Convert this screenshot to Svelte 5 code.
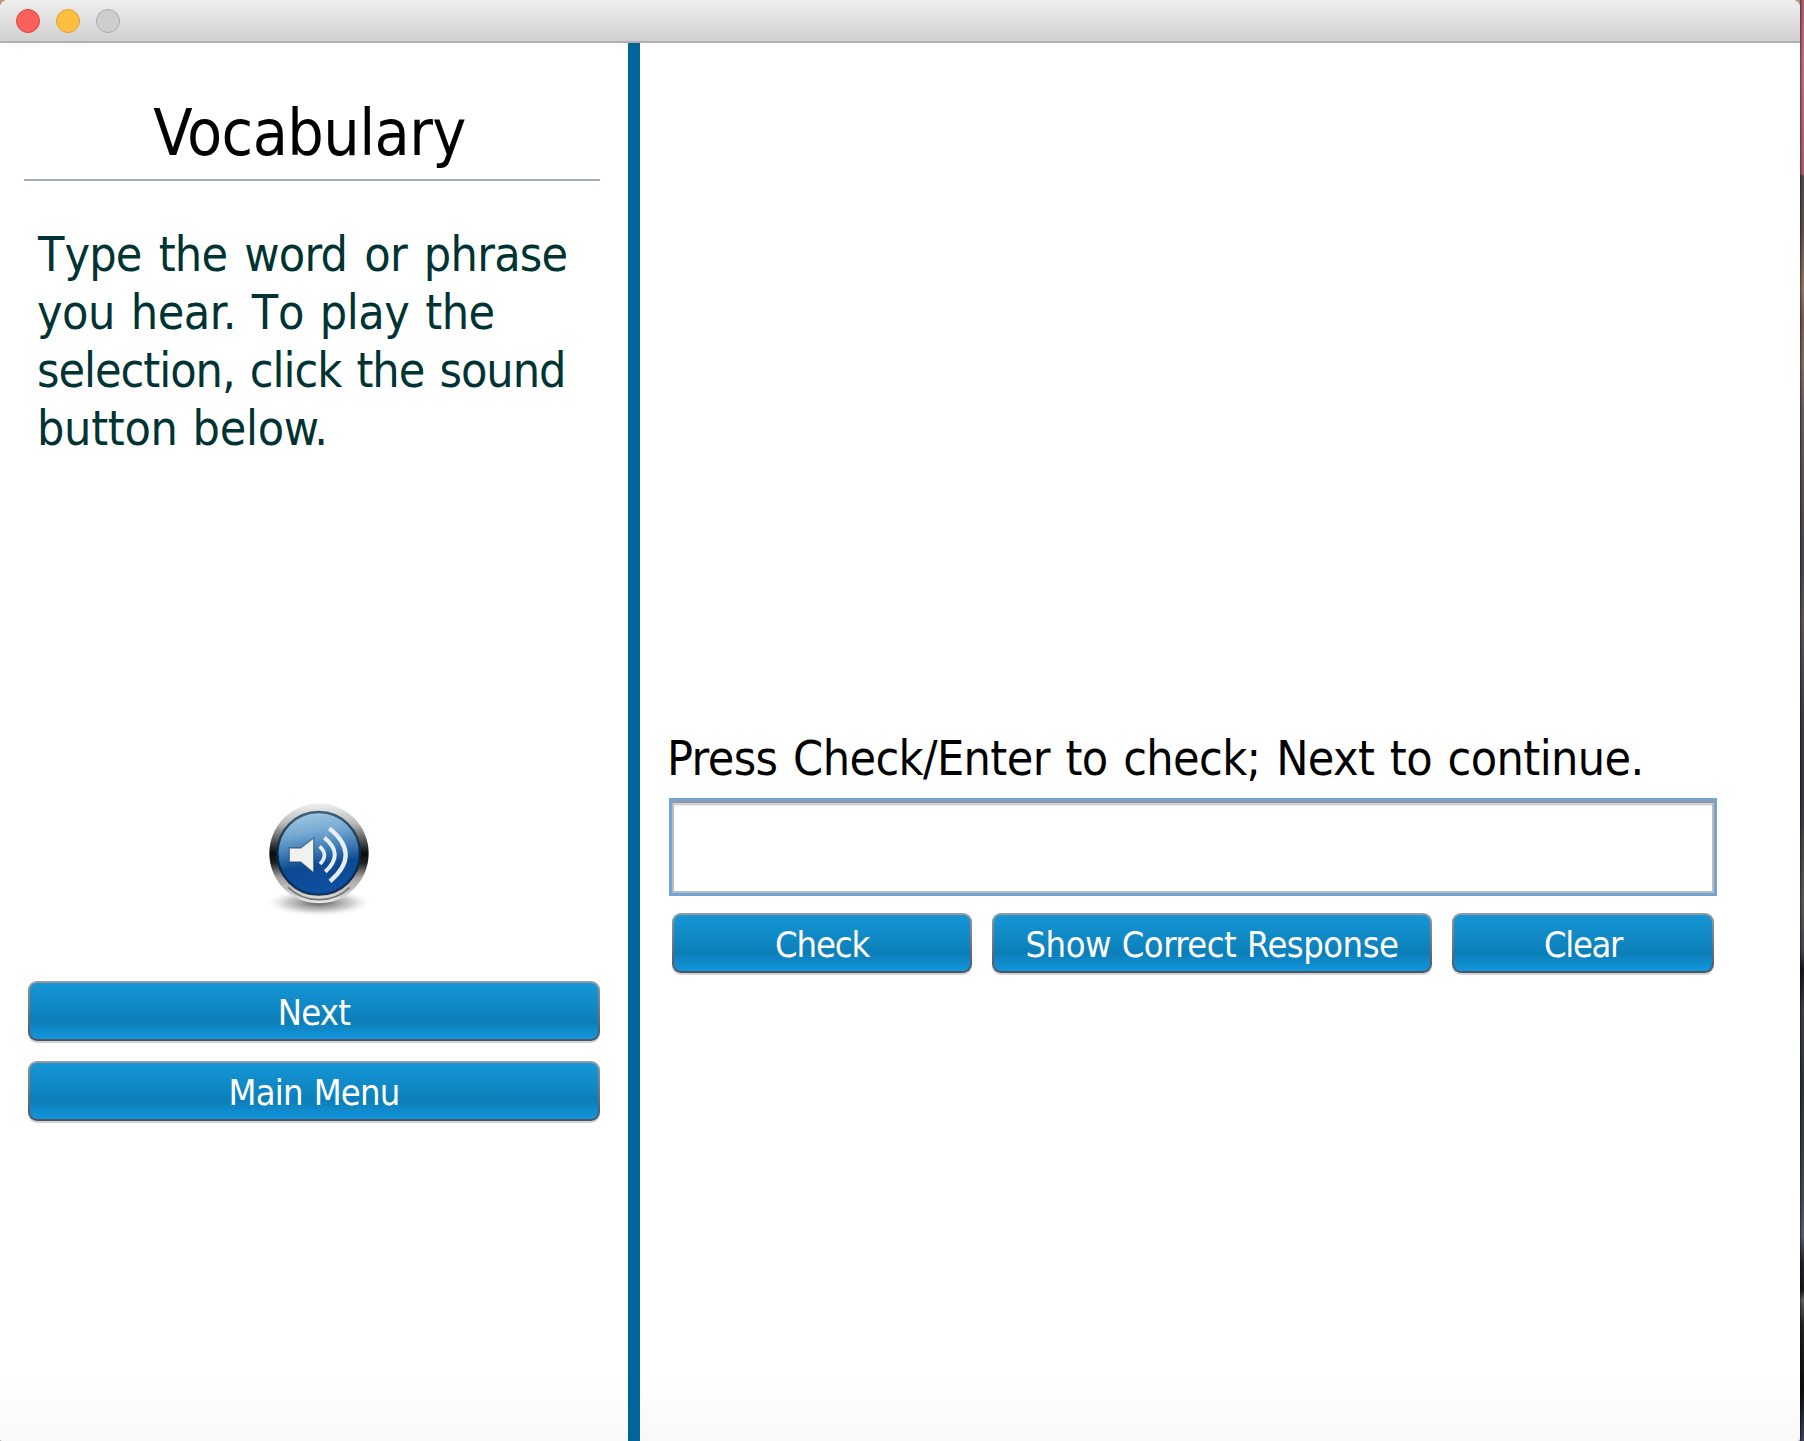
<script>
  let answer = $state('');
</script>

<div class="desktop">
  <div class="window">
    <header class="titlebar">
      <span class="light close"></span>
      <span class="light minimize"></span>
      <span class="light zoom"></span>
    </header>

    <main>
      <aside>
        <h1>Vocabulary</h1>
        <p class="instructions">
          <span class="l1"><span class="cap">T</span>ype the word or phrase</span>
          <span class="l2">you hear. <span class="cap">T</span>o play the</span>
          <span class="l3">selection, click the sound</span>
          <span class="l4">button below.</span>
        </p>

        <div class="sound">
          <svg width="150" height="140" viewBox="0 0 450 420" role="img" aria-label="Play sound">
            <defs>
              <linearGradient id="rim" x1="0" y1="0" x2="0" y2="1">
                <stop offset="0" stop-color="#f1f1f1" />
                <stop offset="0.2" stop-color="#b9bbba" />
                <stop offset="0.37" stop-color="#555" />
                <stop offset="0.5" stop-color="#080a0c" />
                <stop offset="0.6" stop-color="#222426" />
                <stop offset="0.74" stop-color="#a2a19e" />
                <stop offset="1" stop-color="#e9e9e7" />
              </linearGradient>
              <linearGradient id="face" x1="0.35" y1="0" x2="0.5" y2="1">
                <stop offset="0" stop-color="#a0c9e4" />
                <stop offset="0.25" stop-color="#76a9d2" />
                <stop offset="0.48" stop-color="#3b77b2" />
                <stop offset="0.65" stop-color="#0b4a92" />
                <stop offset="1" stop-color="#0750a3" />
              </linearGradient>
              <linearGradient id="edge" x1="0" y1="0" x2="0" y2="1">
                <stop offset="0" stop-color="#3f6076" />
                <stop offset="0.5" stop-color="#0b2742" />
                <stop offset="1" stop-color="#13335a" />
              </linearGradient>
              <radialGradient id="shade">
                <stop offset="0" stop-color="#444" stop-opacity="0.9" />
                <stop offset="0.6" stop-color="#888" stop-opacity="0.4" />
                <stop offset="1" stop-color="#fff" stop-opacity="0" />
              </radialGradient>
              <filter id="soft" x="-10%" y="-10%" width="120%" height="120%">
                <feGaussianBlur stdDeviation="2.2" />
              </filter>
            </defs>
            <ellipse cx="237" cy="338" rx="165" ry="42" fill="url(#shade)" />
            <g filter="url(#soft)">
              <ellipse cx="237" cy="190" rx="149" ry="150" fill="url(#rim)" />
              <path d="M144 292 A138 142 0 0 0 330 292" fill="none" stroke="#777" stroke-width="5" />
              <circle cx="236" cy="190" r="124" fill="url(#face)" stroke="url(#edge)" stroke-width="7" />
            </g>
            <g filter="url(#soft)" stroke="#123c6c" stroke-opacity="0.55" stroke-width="4">
              <path d="M148 174 H182 L221 144 V248 L182 216 H148 Z" fill="#f1f1ef" />
            </g>
            <g fill="none" stroke="#e6edf3" stroke-linecap="butt">
              <path d="M239 169 Q267 195 240 222" stroke-width="11" />
              <path d="M253 143 Q314 192 256 245" stroke-width="12" />
              <path d="M268 115 Q365 193 270 274" stroke-width="13" />
            </g>
          </svg>
        </div>

        <div class="actions">
          <button class="next">Next</button>
          <button class="menu">Main Menu</button>
        </div>
      </aside>

      <section>
        <label for="answer">Press Check/Enter to check; Next to continue.</label>
        <input id="answer" type="text" bind:value={answer} />
        <div class="controls">
          <button class="check">Check</button>
          <button class="show">Show Correct Response</button>
          <button class="clear" onclick={() => (answer = '')}>Clear</button>
        </div>
      </section>
    </main>
  </div>
</div>

<style>
  :global(body) {
    margin: 0;
    overflow: hidden;
  }
  .desktop {
    box-sizing: border-box;
    width: 1804px;
    height: 1441px;
    padding-right: 4px;
    font-family: 'DejaVu Sans Condensed', Tahoma, 'DejaVu Sans', sans-serif;
    background:
      linear-gradient(90deg, #0008, #0000 2px) right / 4px 100% no-repeat,
      linear-gradient(#a4616c 0, #b36f7b 60px, #a25f6b 174px, #51464c 176px, #5e4e4c 230px, #8f7465 290px, #705950 320px, #806a60 365px, #675a5d 410px, #48444c 560px, #5a535a 620px, #39383f 730px, #36353c 800px, #5b555a 900px, #45454d 950px, #15161b 970px, #3c3f4a 1010px, #2c303a 1090px, #454956 1200px, #555b6c 1235px, #24262d 1262px, #17181c 1290px, #605e64 1300px, #222 1325px, #0c0d10 1390px, #39445a 1441px) right / 4px 100% no-repeat,
      #b3968a;
  }
  .window {
    display: flex;
    flex-direction: column;
    height: 100%;
    border-radius: 8px 8px 3px 2px;
    overflow: hidden;
    background: linear-gradient(#fff 1370px, #f9f9f9);
  }
  .titlebar {
    box-sizing: border-box;
    display: flex;
    align-items: center;
    gap: 16px;
    height: 43px;
    padding-left: 16px;
    background: linear-gradient(#eeeeee, #d1d1d1);
    border-bottom: 2px solid #b0b0b0;
  }
  .light {
    box-sizing: border-box;
    width: 24px;
    height: 24px;
    border-radius: 50%;
    border: 1px solid;
  }
  .close {
    background: #fc605c;
    border-color: #e0443e;
  }
  .minimize {
    background: #fdbe41;
    border-color: #dea035;
  }
  .zoom {
    background: #cecece;
    border-color: #ababab;
  }
  main {
    flex: 1;
    display: flex;
  }
  aside {
    box-sizing: border-box;
    width: 640px;
    padding: 53px 28px 0 24px;
    border-right: 12px solid #006699;
  }
  h1 {
    margin: 0;
    height: 83px;
    padding-right: 5px;
    font-size: 64px;
    font-weight: 400;
    line-height: 74px;
    letter-spacing: -0.6px;
    text-align: center;
    color: #000;
    border-bottom: 2px solid #a4abb7;
  }
  .instructions {
    margin: 44px 0 0;
    padding-left: 13px;
    font-size: 48px;
    line-height: 58px;
    color: #033;
    white-space: nowrap;
  }
  .l1,
  .l2,
  .l3,
  .l4 {
    display: block;
  }
  .cap {
    letter-spacing: 0;
  }
  .l1 {
    padding-left: 1px;
    letter-spacing: -0.75px;
    word-spacing: 4px;
  }
  .l2 {
    letter-spacing: -0.45px;
    word-spacing: 2.5px;
  }
  .l3 {
    letter-spacing: -1.02px;
    word-spacing: 2.5px;
  }
  .l4 {
    letter-spacing: -0.3px;
    word-spacing: 1.5px;
  }
  .sound {
    height: 140px;
    padding: 333px 0 0 216px;
  }
  .sound svg {
    display: block;
  }
  .actions {
    display: flex;
    flex-direction: column;
    gap: 20px;
    padding: 51px 0 0 4px;
  }
  button {
    box-sizing: border-box;
    height: 60px;
    margin: 0;
    padding: 4px 0 0;
    font: 36px/52px 'DejaVu Sans Condensed', Tahoma, 'DejaVu Sans', sans-serif;
    color: #fff;
    white-space: nowrap;
    border: 2px solid transparent;
    border-radius: 9px;
    background:
      linear-gradient(#1696d7, #0f86c2 48%, #0c7eb8 68%, #0f87c6 80%, #1196dd) padding-box,
      linear-gradient(#949ba0, #4d5362) border-box;
    box-shadow: 0 2px 0 #d4d4d6;
  }
  .next {
    letter-spacing: -0.7px;
  }
  .menu {
    letter-spacing: -0.8px;
    word-spacing: 1.5px;
  }
  section {
    padding: 686px 0 0 29px;
  }
  label {
    display: block;
    margin-left: -2px;
    font-size: 48px;
    line-height: 58px;
    letter-spacing: -0.6px;
    word-spacing: 2.5px;
    white-space: nowrap;
    color: #000;
  }
  input {
    box-sizing: border-box;
    display: block;
    width: 1048px;
    height: 98px;
    margin: 11px 0 0;
    padding: 0 12px;
    font: 48px 'DejaVu Sans Condensed', sans-serif;
    background: #fff;
    border: 3px solid #73a4d3;
    border-radius: 0;
    outline: none;
    box-shadow:
      inset 0 2px 0 #999,
      inset 0 0 0 2px #bcbcbc,
      inset 0 4px 0 #d0d0d0,
      inset 0 5px 0 #eee;
  }
  .controls {
    display: grid;
    grid-template-columns: 300px 440px 262px;
    gap: 20px;
    padding: 17px 0 0 3px;
  }
  .check {
    letter-spacing: -1.1px;
  }
  .show {
    letter-spacing: -0.5px;
    word-spacing: 1px;
  }
  .clear {
    letter-spacing: -1.35px;
  }
</style>
